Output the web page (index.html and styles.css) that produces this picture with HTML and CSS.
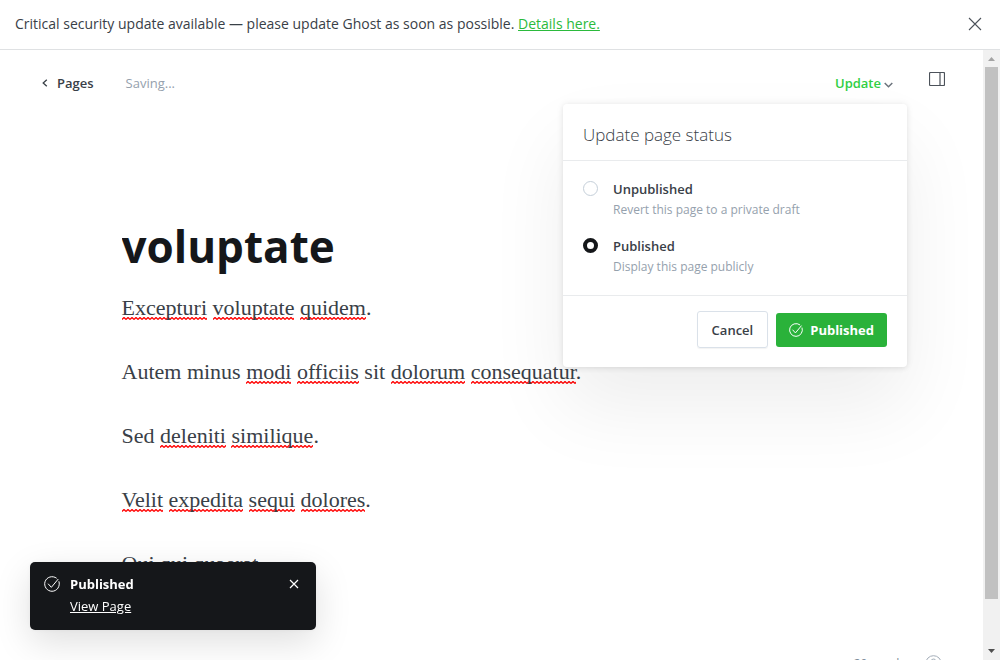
FILE: index.html
```html
<!DOCTYPE html>
<html lang="en">
<head>
<meta charset="utf-8">
<title>Edit page</title>
<link rel="stylesheet" href="styles.css">
</head>
<body>
<div class="alert" role="alert">
  <p class="alert-text">Critical security update available — please update Ghost as soon as possible. <a href="#">Details here.</a></p>
  <button class="icon-button" type="button" aria-label="Dismiss alert">
    <svg width="14" height="14" viewBox="0 0 14 14"><path d="M1 1l12 12M13 1L1 13" fill="none" stroke="#4c525a" stroke-width="1.1"/></svg>
  </button>
</div>
<div class="viewport">
  <main class="editor">
    <header class="toolbar">
      <a class="back" href="#"><svg width="6" height="8" viewBox="0 0 6 8"><path d="M4.8.7L1.2 4l3.6 3.3" fill="none" stroke="#394047" stroke-width="1.3"/></svg>Pages</a>
      <span class="saving">Saving...</span>
      <div class="publish">
        <button class="update" type="button">Update<svg class="chevron" width="9" height="6" viewBox="0 0 9 6"><path d="M.7 1l3.8 3.7L8.3 1" fill="none" stroke="#6b737c" stroke-width="1.5"/></svg></button>
        <form class="menu">
          <h2 class="menu-title">Update page status</h2>
          <div class="menu-body">
            <label class="option"><input type="radio" name="status"><span class="option-text"><span class="option-name">Unpublished</span><span class="option-hint">Revert this page to a private draft</span></span></label>
            <label class="option"><input type="radio" name="status" checked><span class="option-text"><span class="option-name">Published</span><span class="option-hint">Display this page publicly</span></span></label>
          </div>
          <div class="menu-footer">
            <button class="cancel" type="button">Cancel</button>
            <button class="confirm" type="button"><svg width="14" height="14" viewBox="0 0 24 24"><path d="M6.500 12l4.500 5L21 5M22.500 8.500A11 11 0 1 1 18.500 3" fill="none" stroke="#fff" stroke-width="1.7" stroke-linecap="round"/></svg>Published</button>
          </div>
        </form>
      </div>
      <button class="icon-button" type="button" aria-label="Settings">
        <svg width="16" height="14" viewBox="0 0 16 14"><path d="M1.500.5h13a1 1 0 0 1 1 1v11a1 1 0 0 1-1 1h-13a1 1 0 0 1-1-1v-11a1 1 0 0 1 1-1zM11 .5v13" fill="none" stroke="#4c525a" stroke-width="1.2"/></svg>
      </button>
    </header>
    <article class="document">
      <input class="title" type="text" value="voluptate" aria-label="Page title">
      <div class="body">
        <p><u>Excepturi</u> <u>voluptate</u> <u>quidem</u>.</p>
        <p>Autem minus <u>modi</u> <u>officiis</u> sit <u>dolorum</u> <u>consequatur</u>.</p>
        <p>Sed <u>deleniti</u> <u>similique</u>.</p>
        <p><u>Velit</u> <u>expedita</u> <u>sequi</u> <u>dolores</u>.</p>
        <p>Qui qui quaerat.</p>
      </div>
    </article>
    <div class="status">
      <span>20 words</span>
      <svg width="17" height="17" viewBox="0 0 17 17"><circle cx="8.500" cy="8.500" r="7.800" fill="none" stroke="#a3adb8"/><path d="M6 6.500a2.500 2.500 0 1 1 3.500 2.300q-1 .4-1 1.700M8.500 12v1" fill="none" stroke="#a3adb8"/></svg>
    </div>
  </main>
  <div class="scrollbar" aria-hidden="true">
    <svg width="17" height="17" viewBox="0 0 17 17"><path d="M5 11h7L8.500 7z" fill="#a3a3a3"/></svg>
    <div class="track"><div class="thumb"></div></div>
    <svg width="17" height="17" viewBox="0 0 17 17"><path d="M5 6h7l-3.500 4z" fill="#505050"/></svg>
  </div>
</div>
<aside class="toast" role="status">
  <svg width="16" height="16" viewBox="0 0 24 24"><path d="M6.500 12l4.500 5L21 5M22.500 8.500A11 11 0 1 1 18.500 3" fill="none" stroke="#fff" stroke-width="1.500" stroke-linecap="round"/></svg>
  <div class="toast-text"><strong>Published</strong><a href="#">View Page</a></div>
  <button class="icon-button" type="button" aria-label="Close notification">
    <svg width="10" height="10" viewBox="0 0 10 10"><path d="M1 1l8 8M9 1L1 9" fill="none" stroke="#fff" stroke-width="1.200"/></svg>
  </button>
</aside>
</body>
</html>
```
FILE: styles.css
```css
* {
  box-sizing: border-box;
}

body {
  display: flex;
  flex-direction: column;
  height: 100vh;
  margin: 0;
  overflow: hidden;
  background: #fff;
  color: #394047;
  font: 14px/20px "Open Sans", "Noto Sans", sans-serif;
}

p, h2 {
  margin: 0;
}

svg {
  display: block;
  flex: none;
}

button {
  padding: 0;
  border: 0;
  background: none;
  color: inherit;
  font: inherit;
}

.alert {
  display: flex;
  flex: none;
  align-items: center;
  justify-content: space-between;
  height: 50px;
  padding: 0 18px 1px 15px;
  border-bottom: 1px solid #dfe1e3;
}

.alert a {
  color: #2bba3c;
}

.viewport {
  display: flex;
  flex: 1;
  min-height: 0;
}

.editor {
  display: flex;
  flex: 1;
  flex-direction: column;
  position: relative;
  overflow: hidden;
}

.toolbar {
  display: flex;
  flex: none;
  align-items: center;
  height: 58px;
  padding: 8px 38px 0 42px;
}

.back {
  display: flex;
  align-items: center;
  gap: 9px;
  color: #394047;
  font-weight: 600;
  font-size: 13px;
  text-decoration: none;
}

.saving {
  margin-left: 32px;
  color: #95a1ad;
  font-size: 13px;
}

.publish {
  position: relative;
  margin-left: auto;
  margin-right: 36px;
}

.update {
  display: flex;
  align-items: center;
  gap: 3px;
  color: #30cf43;
  font-weight: 600;
  font-size: 13px;
}

.chevron {
  margin-top: 4px;
}

.toolbar > .icon-button {
  padding-bottom: 8px;
}

.menu {
  position: absolute;
  z-index: 2;
  top: 31px;
  right: -14px;
  width: 344px;
  border-radius: 4px;
  background: #fff;
  box-shadow: 0 0 7px rgba(0, 0, 0, .08), 0 2px 5px rgba(0, 0, 0, .05), 0 40px 80px rgba(0, 0, 0, .07);
}

.menu-title {
  padding: 19px 20px 13px;
  border-bottom: 1px solid #e9ebed;
  font-weight: 300;
  font-size: 17px;
  line-height: 24px;
}

.menu-body {
  display: flex;
  flex-direction: column;
  gap: 16px;
  padding: 18px 20px;
}

.option {
  display: flex;
  gap: 15px;
}

.option input {
  flex: none;
  appearance: none;
  width: 15px;
  height: 15px;
  margin: 2px 0 0;
  border: 1px solid #c5cfd9;
  border-radius: 50%;
}

.option input:checked {
  border: 4px solid #15171a;
}

.option-text {
  display: flex;
  flex-direction: column;
  gap: 1px;
  font-size: 13px;
}

.option-name {
  font-weight: 600;
}

.option-hint {
  color: #95a1ad;
  font-size: 12px;
}

.menu-footer {
  display: flex;
  align-items: center;
  justify-content: flex-end;
  gap: 8px;
  padding: 15px 20px 19px;
  border-top: 1px solid #e9ebed;
  font-weight: 600;
  font-size: 13px;
}

.cancel {
  height: 37px;
  padding: 0 14px;
  border: 1px solid #dae1e9;
  border-radius: 3px;
  box-shadow: 0 1px 1px rgba(0, 0, 0, .05);
}

.confirm {
  display: flex;
  align-items: center;
  gap: 7px;
  height: 34px;
  padding: 0 13px;
  border-radius: 3px;
  background: #2ab23a;
  color: #fff;
  font-weight: 700;
}

.document {
  width: 100%;
  max-width: 740px;
  margin: 0 auto;
  padding-top: 110px;
}

.title {
  display: block;
  width: 100%;
  height: 56px;
  margin-bottom: 18px;
  padding: 0;
  border: 0;
  outline: 0;
  background: none;
  color: #15171a;
  font: 700 44px/56px "Open Sans", "Noto Sans", sans-serif;
}

.body {
  display: flex;
  flex-direction: column;
  gap: 32px;
  font: 22px/32px "Liberation Serif", serif;
}

.body u {
  background: url("data:image/svg+xml,%3Csvg xmlns='http://www.w3.org/2000/svg' width='4' height='3'%3E%3Cpath d='M0 2.500L2 .5l2 2' fill='none' stroke='red' stroke-width='1.3'/%3E%3C/svg%3E") left bottom repeat-x;
  text-decoration: none;
}

.status {
  display: flex;
  align-items: center;
  gap: 20px;
  position: absolute;
  right: 41px;
  bottom: -12px;
  color: #7c8b9a;
  font-size: 12px;
  line-height: 16px;
}

.scrollbar {
  display: flex;
  flex: none;
  flex-direction: column;
  width: 17px;
  background: #f1f1f1;
}

.track {
  flex: 1;
  padding: 0 2px;
}

.thumb {
  height: 92.4%;
  background: #c1c1c1;
}

.toast {
  display: flex;
  align-items: flex-start;
  gap: 10px;
  position: fixed;
  z-index: 3;
  bottom: 30px;
  left: 30px;
  width: 286px;
  padding: 13px 17px 14px 14px;
  border-radius: 5px;
  background: #15171a;
  box-shadow: 0 0 5px rgba(0, 0, 0, .05), 0 12px 36px rgba(0, 0, 0, .13);
  color: #fff;
  font-size: 13px;
}

.toast-text {
  display: flex;
  flex: 1;
  flex-direction: column;
  align-items: flex-start;
  gap: 3px;
  line-height: 19px;
}

.toast a {
  color: #fff;
}

.toast > svg {
  margin-top: 1px;
}

.toast .icon-button {
  padding-top: 4px;
}
```
